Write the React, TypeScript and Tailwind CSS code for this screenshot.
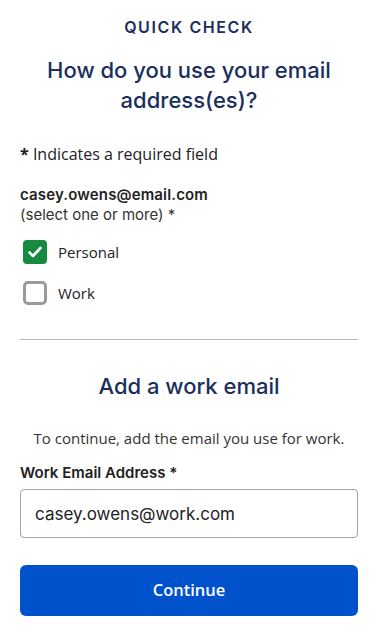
import { useState } from 'react'

function Checkbox({ label, checked, onToggle }: { label: string; checked: boolean; onToggle: () => void }) {
  return (
    <label className="flex items-center gap-[11px] cursor-pointer" onClick={onToggle}>
      {checked ? (
        <span className="w-[24px] h-[24px] rounded-[4px] bg-[#168a3e] flex items-center justify-center">
          <svg width="16" height="16" viewBox="0 0 16 16" fill="none">
            <path d="M2.5 8.5l3.5 3.5 7.5-8" stroke="white" strokeWidth="2.6" strokeLinecap="round" strokeLinejoin="round" />
          </svg>
        </span>
      ) : (
        <span className="w-[24px] h-[24px] rounded-[5px] border-[3px] border-[#9a9a9a] bg-white" />
      )}
      <span className="text-[15px] text-[#222] font-['Open_Sans',sans-serif]">{label}</span>
    </label>
  )
}

export default function App() {
  const [personal, setPersonal] = useState(true)
  const [work, setWork] = useState(false)
  const [email, setEmail] = useState('casey.owens@work.com')

  return (
    <div className="w-[378px] min-h-[627px] bg-white px-[20px] pt-[16px] text-[#222] font-['Inter',sans-serif]">
      <div className="text-center text-[16px] font-semibold tracking-[0.1em] text-[#1b2f5c] leading-[22px]">
        QUICK CHECK
      </div>
      <h1 className="mt-[17px] text-center text-[22px] font-medium leading-[30px] text-[#1b2f5c]">
        How do you use your email<br />address(es)?
      </h1>

      <p className="mt-[28px] text-[16px] leading-[22px] font-['Open_Sans',sans-serif]">
        <span className="font-bold">*</span> Indicates a required field
      </p>

      <div className="mt-[20px] text-[15px] leading-[20px]">
        <div className="font-semibold text-[#222] tracking-[0.01em]">casey.owens@email.com</div>
        <div className="text-[#333]">(select one or more) *</div>
      </div>

      <div className="mt-[15px] ml-[3px] flex flex-col gap-[17px]">
        <Checkbox label="Personal" checked={personal} onToggle={() => setPersonal(!personal)} />
        <Checkbox label="Work" checked={work} onToggle={() => setWork(!work)} />
      </div>

      <hr className="mt-[34px] border-0 border-t border-[#b8b8b8]" />

      <h2 className="mt-[32px] text-center text-[22px] font-medium leading-[28px] text-[#1b2f5c]">
        Add a work email
      </h2>

      <p className="mt-[28px] text-center text-[15px] leading-[20px] text-[#333] font-['Open_Sans',sans-serif]">
        To continue, add the email you use for work.
      </p>

      <label className="block mt-[15px] text-[15px] font-semibold leading-[20px] text-[#222]">
        Work Email Address *
      </label>
      <input
        value={email}
        onChange={e => setEmail(e.target.value)}
        className="mt-[6px] w-full h-[49px] rounded-[4px] border border-[#a3a3a3] px-[14px] text-[17px] text-[#222] outline-none"
      />

      <button className="mt-[27px] w-full h-[51px] rounded-[6px] bg-[#0052cc] text-white text-[16.5px] font-semibold font-['Open_Sans',sans-serif]">
        Continue
      </button>
    </div>
  )
}
